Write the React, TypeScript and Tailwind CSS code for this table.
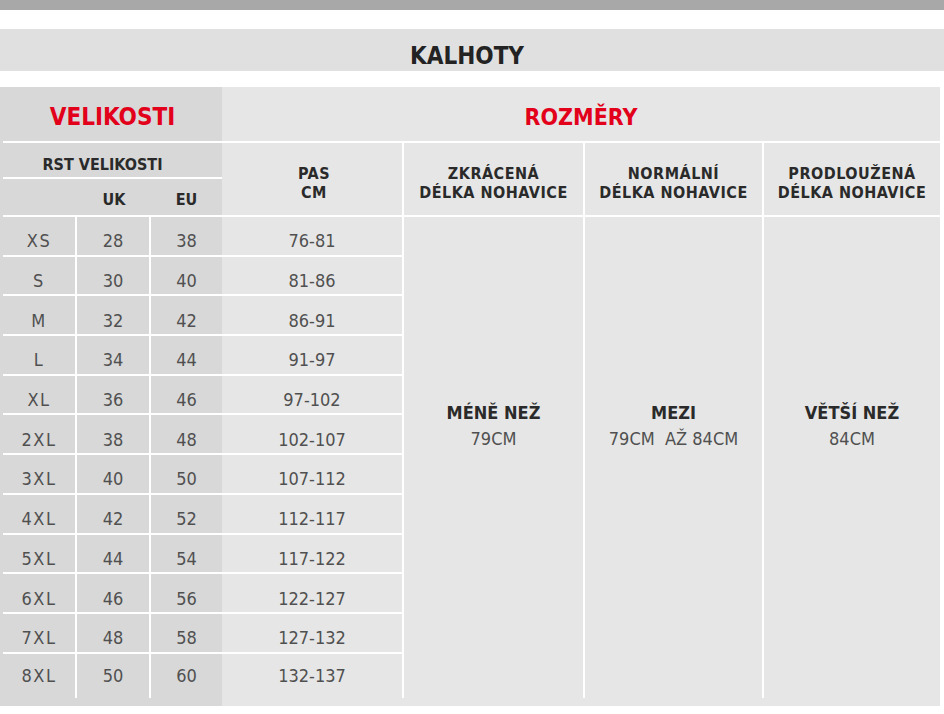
const sizes = [
  { size: "XS", uk: "28", eu: "38", pas: "76-81" },
  { size: "S", uk: "30", eu: "40", pas: "81-86" },
  { size: "M", uk: "32", eu: "42", pas: "86-91" },
  { size: "L", uk: "34", eu: "44", pas: "91-97" },
  { size: "XL", uk: "36", eu: "46", pas: "97-102" },
  { size: "2XL", uk: "38", eu: "48", pas: "102-107" },
  { size: "3XL", uk: "40", eu: "50", pas: "107-112" },
  { size: "4XL", uk: "42", eu: "52", pas: "112-117" },
  { size: "5XL", uk: "44", eu: "54", pas: "117-122" },
  { size: "6XL", uk: "46", eu: "56", pas: "122-127" },
  { size: "7XL", uk: "48", eu: "58", pas: "127-132" },
  { size: "8XL", uk: "50", eu: "60", pas: "132-137" },
];

const lengths = [
  { title: "ZKRÁCENÁ", bold: "MÉNĚ NEŽ", value: "79CM" },
  { title: "NORMÁLNÍ", bold: "MEZI", value: "79CM  AŽ 84CM" },
  { title: "PRODLOUŽENÁ", bold: "VĚTŠÍ NEŽ", value: "84CM" },
];

const last = sizes.length - 1;

// rows sit a little low in their cells, the last one is taller and centred
const rowClass = (i: number) =>
  i < last ? "h-[39.7px] border-b-2 border-white" : "h-[44.3px]";
const padClass = (i: number) => (i < last ? "pt-[10px]" : "");

export default function App() {
  return (
    <div className="w-[944px] h-[714px] bg-white font-['DejaVu_Sans_Condensed','DejaVu_Sans',sans-serif] font-stretch-condensed overflow-hidden">
      {/* top strip + title */}
      <div className="h-[10px] bg-[#a8a8a8]" />
      <div className="h-[19px]" />
      <div className="h-[42px] bg-[#e0e0e0] flex items-center justify-center pt-[12px] pr-[10px]">
        <h1 className="text-[24px] font-bold text-[#232323] leading-none">KALHOTY</h1>
      </div>
      <div className="h-[16px]" />

      <div className="flex h-[619px] pr-[4px]">
        {/* Velikosti */}
        <div className="w-[222px] bg-[#d8d8d8] pl-[3px] flex flex-col">
          <div className="h-[56px] border-b-2 border-white flex items-center justify-center pt-[6px]">
            <h2 className="text-[24px] font-bold text-[#e2001a] leading-none">VELIKOSTI</h2>
          </div>
          <div className="h-[36px] border-b-2 border-white flex items-center justify-center pr-[20px] pt-[10px]">
            <span className="text-[16px] font-bold text-[#2a2a2a] leading-none">RST VELIKOSTI</span>
          </div>
          <div className="h-[38px] border-b-2 border-white grid grid-cols-[74px_74px_1fr] items-center text-[16px] font-bold text-[#2a2a2a] text-center pt-[5px]">
            <span />
            <span>UK</span>
            <span>EU</span>
          </div>
          {sizes.map((row, i) => (
            <div
              key={row.size}
              className={`grid grid-cols-[74px_74px_1fr] text-[18px] text-[#505050] text-center ${rowClass(i)}`}
            >
              <span className={`flex items-center justify-center border-r-2 border-white tracking-[1.5px] ${padClass(i)}`}>
                {row.size}
              </span>
              <span className={`flex items-center justify-center border-r-2 border-white ${padClass(i)}`}>
                {row.uk}
              </span>
              <span className={`flex items-center justify-center ${padClass(i)}`}>{row.eu}</span>
            </div>
          ))}
        </div>

        {/* Rozmery */}
        <div className="flex-1 bg-[#e6e6e6] flex flex-col">
          <div className="h-[56px] border-b-2 border-white flex items-center justify-center pt-[7px]">
            <h2 className="text-[23px] font-bold text-[#e2001a] leading-none">ROZMĚRY</h2>
          </div>
          <div className="grid grid-cols-[182px_181px_179px_1fr] h-[563px]">
            {/* Pas column */}
            <div className="flex flex-col">
              <div className="h-[74px] border-b-2 border-r-2 border-white flex flex-col items-center justify-center pt-[8px] pl-[4px] text-[16px] font-bold text-[#2a2a2a] leading-[19px] tracking-[0.5px]">
                <span>PAS</span>
                <span>CM</span>
              </div>
              {sizes.map((row, i) => (
                <div
                  key={row.pas}
                  className={`flex items-center justify-center border-r-2 border-white text-[18px] text-[#505050] ${rowClass(i)} ${padClass(i)}`}
                >
                  {row.pas}
                </div>
              ))}
            </div>

            {lengths.map((col, i) => (
              <div key={col.title} className="flex flex-col h-[555px]">
                <div
                  className={`h-[74px] border-b-2 border-white flex flex-col items-center justify-center pt-[8px] text-[16px] font-bold text-[#2a2a2a] leading-[19px] tracking-[0.5px] ${
                    i < lengths.length - 1 ? "border-r-2" : ""
                  }`}
                >
                  <span>{col.title}</span>
                  <span>DÉLKA NOHAVICE</span>
                </div>
                <div
                  className={`flex-1 flex flex-col items-center pt-[183px] text-[18px] leading-[26px] border-white ${
                    i < lengths.length - 1 ? "border-r-2" : ""
                  }`}
                >
                  <span className="font-bold text-[#2a2a2a]">{col.bold}</span>
                  <span className="text-[#505050] whitespace-pre">{col.value}</span>
                </div>
              </div>
            ))}
          </div>
        </div>
      </div>
    </div>
  );
}
